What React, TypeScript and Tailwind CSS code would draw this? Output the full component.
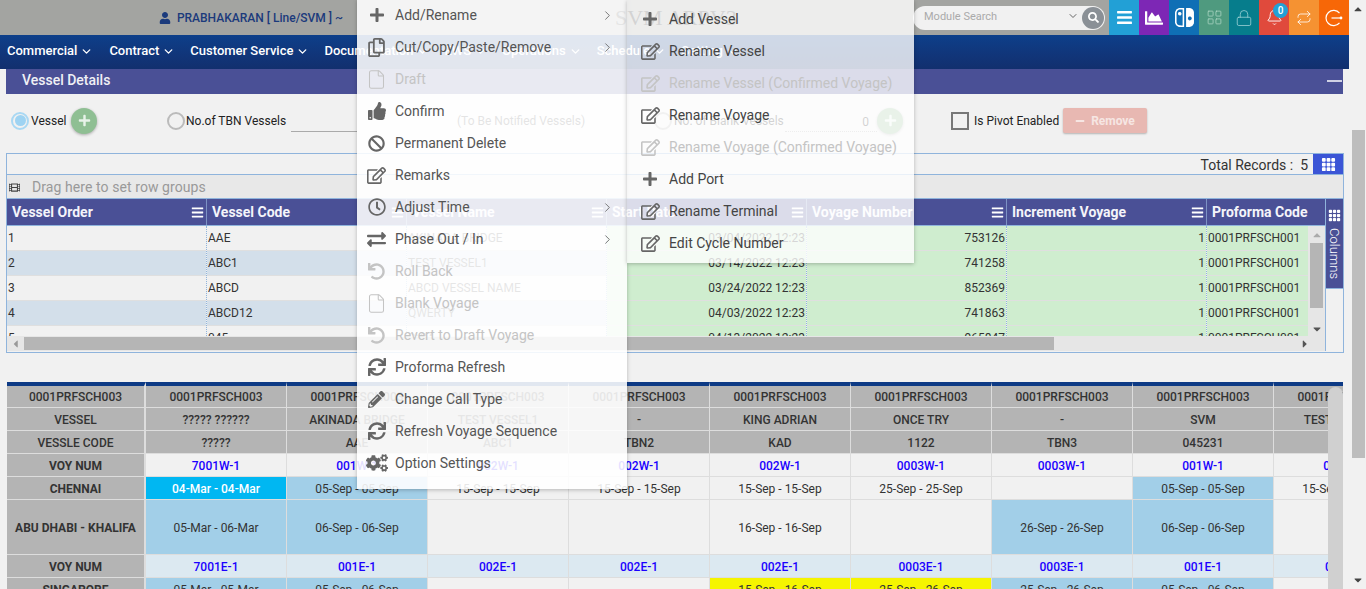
import { FaUser, FaBars, FaChartArea, FaPlus, FaMinus, FaRegCopy, FaThumbsUp, FaBan, FaRegEdit, FaRegClock, FaExchangeAlt, FaUndo, FaSync, FaPencilAlt, FaCogs, FaSearch, FaCaretUp, FaCaretDown, FaCaretLeft, FaCaretRight, FaFilm } from "react-icons/fa";
import { BsNintendoSwitch, BsGrid3X3GapFill } from "react-icons/bs";
import { ChevronDown, ChevronRight, File, LayoutGrid, Lock, Bell, Repeat } from "lucide-react";
import type { ReactNode } from "react";

const navItems = ["Commercial", "Contract", "Customer Service", "Documentation", "EWS", "Operations", "Schedule", "Setting"];

const gridCols = [
  { title: "Vessel Order", values: ["1", "2", "3", "4", "5"] },
  { title: "Vessel Code", values: ["AAE", "ABC1", "ABCD", "ABCD12", "045"] },
  { title: "Vessel Name", values: ["AKINADA BRIDGE", "TEST VESSEL1", "ABCD VESSEL NAME", "QWERTY", "SVM"] },
  { title: "Start Date", values: ["03/04/2022 12:23", "03/14/2022 12:23", "03/24/2022 12:23", "04/03/2022 12:23", "04/13/2022 12:23"], right: true, green: true },
  { title: "Voyage Number", values: ["753126", "741258", "852369", "741863", "965847"], right: true, green: true },
  { title: "Increment Voyage", values: ["1", "1", "1", "1", "1"], right: true, green: true },
  { title: "Proforma Code", values: ["0001PRFSCH001", "0001PRFSCH001", "0001PRFSCH001", "0001PRFSCH001", "0001PRFSCH001"], green: true },
];

type Tone = "" | "blue" | "cyan" | "yellow";
type Sched = { vessel: string; code: string; west: string; chennai: [string, Tone]; abu: [string, Tone]; east: string; sing: [string, Tone] };

const sched: Sched[] = [
  { vessel: "????? ??????", code: "?????", west: "7001W-1", chennai: ["04-Mar - 04-Mar", "cyan"], abu: ["05-Mar - 06-Mar", "blue"], east: "7001E-1", sing: ["05-Mar - 05-Mar", "blue"] },
  { vessel: "AKINADA BRIDGE", code: "AAE", west: "001W-1", chennai: ["05-Sep - 05-Sep", "blue"], abu: ["06-Sep - 06-Sep", "blue"], east: "001E-1", sing: ["05-Sep - 06-Sep", "blue"] },
  { vessel: "TEST VESSEL1", code: "ABC1", west: "002W-1", chennai: ["15-Sep - 15-Sep", ""], abu: ["", ""], east: "002E-1", sing: ["", ""] },
  { vessel: "-", code: "TBN2", west: "002W-1", chennai: ["15-Sep - 15-Sep", ""], abu: ["", ""], east: "002E-1", sing: ["", ""] },
  { vessel: "KING ADRIAN", code: "KAD", west: "002W-1", chennai: ["15-Sep - 15-Sep", ""], abu: ["16-Sep - 16-Sep", ""], east: "002E-1", sing: ["15-Sep - 16-Sep", "yellow"] },
  { vessel: "ONCE TRY", code: "1122", west: "0003W-1", chennai: ["25-Sep - 25-Sep", ""], abu: ["", ""], east: "0003E-1", sing: ["25-Sep - 26-Sep", "yellow"] },
  { vessel: "-", code: "TBN3", west: "0003W-1", chennai: ["", ""], abu: ["26-Sep - 26-Sep", "blue"], east: "0003E-1", sing: ["25-Sep - 26-Sep", "blue"] },
  { vessel: "SVM", code: "045231", west: "001W-1", chennai: ["05-Sep - 05-Sep", "blue"], abu: ["06-Sep - 06-Sep", "blue"], east: "001E-1", sing: ["05-Sep - 06-Sep", "blue"] },
  { vessel: "TEST VESSEL1", code: "ABC1", west: "002W-1", chennai: ["15-Sep - 15-Sep", ""], abu: ["", ""], east: "002E-1", sing: ["", ""] },
];

const toneClass = {
  "": "bg-[#f1f1f1] text-[#333]",
  blue: "bg-[#a2cfe8] text-[#333]",
  cyan: "bg-[#00b7f2] text-white font-medium",
  yellow: "bg-[#f5f500] text-[#333]",
};

const LogoutIcon = () => (
  <svg width="18" height="18" viewBox="0 0 18 18" fill="none" stroke="currentColor" strokeWidth="1.2">
    <path d="M14.5 4.2A7.6 7.6 0 1 0 14.5 13.8" />
    <path d="M6.5 9H17" />
    <circle cx="16" cy="9" r="0.8" fill="currentColor" />
  </svg>
);

const tiles: { bg: string; icon: ReactNode }[] = [
  { bg: "bg-[#22a0d6]", icon: <FaBars size={17} /> },
  { bg: "bg-[#7d27b5]", icon: <FaChartArea size={18} /> },
  { bg: "bg-[#0f6fb5]", icon: <BsNintendoSwitch size={19} /> },
  { bg: "bg-[#4f9a7f]", icon: <LayoutGrid size={17} strokeWidth={1} className="text-[#b6dccb]" /> },
  { bg: "bg-[#067d8c]", icon: <Lock size={18} strokeWidth={1} className="text-[#a5d5da]" /> },
  { bg: "bg-[#e04a3c]", icon: <Bell size={17} strokeWidth={1.3} /> },
  { bg: "bg-[#f59232]", icon: <Repeat size={16} strokeWidth={1.2} /> },
  { bg: "bg-[#f76707]", icon: <LogoutIcon /> },
];

type Item = { label: string; icon: ReactNode; off?: boolean; arrow?: boolean };

const mainMenu: Item[] = [
  { label: "Add/Rename", icon: <FaPlus size={16} />, arrow: true },
  { label: "Cut/Copy/Paste/Remove", icon: <FaRegCopy size={19} />, arrow: true },
  { label: "Draft", icon: <File size={21} strokeWidth={1.2} />, off: true },
  { label: "Confirm", icon: <FaThumbsUp size={18} /> },
  { label: "Permanent Delete", icon: <FaBan size={17} /> },
  { label: "Remarks", icon: <FaRegEdit size={19} /> },
  { label: "Adjust Time", icon: <FaRegClock size={18} />, arrow: true },
  { label: "Phase Out / In", icon: <FaExchangeAlt size={19} />, arrow: true },
  { label: "Roll Back", icon: <FaUndo size={17} />, off: true },
  { label: "Blank Voyage", icon: <File size={21} strokeWidth={1.2} />, off: true },
  { label: "Revert to Draft Voyage", icon: <FaUndo size={17} />, off: true },
  { label: "Proforma Refresh", icon: <FaSync size={18} /> },
  { label: "Change Call Type", icon: <FaPencilAlt size={17} /> },
  { label: "Refresh Voyage Sequence", icon: <FaSync size={18} /> },
  { label: "Option Settings", icon: <FaCogs size={22} /> },
];

const subMenu: Item[] = [
  { label: "Add Vessel", icon: <FaPlus size={16} /> },
  { label: "Rename Vessel", icon: <FaRegEdit size={19} /> },
  { label: "Rename Vessel (Confirmed Voyage)", icon: <FaRegEdit size={19} />, off: true },
  { label: "Rename Voyage", icon: <FaRegEdit size={19} /> },
  { label: "Rename Voyage (Confirmed Voyage)", icon: <FaRegEdit size={19} />, off: true },
  { label: "Add Port", icon: <FaPlus size={16} /> },
  { label: "Rename Terminal", icon: <FaRegEdit size={19} /> },
  { label: "Edit Cycle Number", icon: <FaRegEdit size={19} /> },
];

const MenuRow = ({ item, sub }: { item: Item; sub?: boolean }) => (
  <div className={`flex h-8 items-center ${item.off ? "text-[#c4c4c4]" : sub ? "text-[#444]" : "text-[#555]"}`}>
    <span className={`flex shrink-0 justify-center ${sub ? "w-[42px] pl-[4px]" : "w-[38px] pl-[1px]"} ${item.off ? "" : "text-[#666]"}`}>{item.icon}</span>
    <span>{item.label}</span>
    {item.arrow && <ChevronRight size={15} strokeWidth={1.4} className="ml-auto mr-[12px] text-[#666]" />}
  </div>
);

const Radio = ({ on }: { on?: boolean }) => (
  <span className={`flex h-[18px] w-[18px] shrink-0 items-center justify-center rounded-full border-2 ${on ? "border-[#a9d8f3]" : "border-[#bbb]"}`}>
    {on && <span className="h-[11px] w-[11px] rounded-full bg-[#9ed3f2]" />}
  </span>
);

const PlusBtn = () => (
  <span className="flex h-[26px] w-[26px] shrink-0 items-center justify-center rounded-full bg-[#8fbf93] text-[#e8f3e9] shadow-[0_1px_3px_rgba(0,0,0,0.3)]">
    <FaPlus size={13} />
  </span>
);

const MenuLines = () => <FaBars size={13} className="text-white" />;

export default function App() {
  return (
    <div className="relative flex h-[589px] w-[1366px] overflow-hidden bg-[#f1f1f1] font-['Roboto',sans-serif] text-[#333]">
      <div className="w-[1350px] shrink-0">
        {/* Top bar */}
        <div className="flex h-[35px] w-[1349px] items-center bg-[#a3a4a1]">
          <div className="flex w-[357px] items-center justify-end gap-[6px] pr-[14px] text-[12px] font-medium text-[#1b3a7c]">
            <FaUser size={12} />
            <span>PRABHAKARAN [ Line/SVM ] ~</span>
          </div>
          <div className="flex-1 pl-[258px] font-['Liberation_Serif',serif] text-[22px] leading-none text-[#222]">SVM ARPV3</div>
          <div className="relative mr-[4px] flex h-6 w-[192px] items-center rounded-full bg-[#f1f1f1] pl-[11px] text-[11px] text-[#aaa]">
            Module Search
            <ChevronDown size={12} className="absolute left-[154px] top-[4px] text-[#666]" />
            <span className="absolute right-[1px] top-[1px] flex h-[22px] w-[22px] items-center justify-center rounded-full bg-[#8a9096] text-white">
              <FaSearch size={11} />
            </span>
          </div>
          {tiles.map((t, i) => (
            <div key={i} className={`relative flex h-[35px] w-[30px] items-center justify-center text-white ${t.bg}`}>
              {t.icon}
              {i === 5 && (
                <span className="absolute right-[1px] top-[3px] flex h-[15px] w-[15px] items-center justify-center rounded-full bg-[#22a0d6] text-[10px] font-medium">0</span>
              )}
            </div>
          ))}
        </div>

        {/* Nav */}
        <div className="flex h-[34px] w-[1349px] items-center gap-[15px] bg-gradient-to-b from-[#0d3f8a] to-[#122f6e] pb-[2px] pl-[7px] text-[13px] font-medium text-white">
          {navItems.map((n) => (
            <span key={n} className="flex items-center gap-[3px] first:mr-[1px]">
              {n}
              <ChevronDown size={13} strokeWidth={2.5} />
            </span>
          ))}
        </div>

        {/* Panel */}
        <div className="ml-[6px] w-[1337px]">
          <div className="flex h-[25px] items-center justify-between bg-[#4a5096] pb-[2px] pl-4 pr-[1px] text-[14px] font-medium text-[#f0f0f5]">
            Vessel Details
            <span className="h-[2px] w-[15px] bg-[#cfd1e4]" />
          </div>

          <div className="flex h-[59px] items-center pb-[6px] text-[12px] text-[#222]">
            <span className="ml-[5px]"><Radio on /></span>
            <span className="ml-[2px] w-[40px]">Vessel</span>
            <PlusBtn />
            <span className="ml-[70px]"><Radio /></span>
            <span className="ml-[1px] w-[105px]">No.of TBN Vessels</span>
            <span className="h-[22px] w-[66px] border-b border-[#aaa]" />
            <span className="ml-[100px] w-[197px]">(To Be Notified Vessels)</span>
            <Radio />
            <span className="ml-[2px] w-[111px]">No. of Blank Vessels</span>
            <span className="flex h-[22px] w-[92px] items-end justify-end border-b border-dotted border-[#aaa] pr-[8px]">0</span>
            <PlusBtn />
            <span className="ml-[48px] h-[18px] w-[18px] shrink-0 border-2 border-[#777]" />
            <span className="ml-[5px] w-[85px] whitespace-nowrap">Is Pivot Enabled</span>
            <span className="ml-[4px] flex h-[25px] w-[84px] items-center justify-center gap-[6px] rounded-[2px] bg-[#e8b8b2] font-bold text-[#f6e6e3] shadow-[0_1px_2px_rgba(0,0,0,0.25)]">
              <FaMinus size={10} /> Remove
            </span>
          </div>

          {/* Vessel grid */}
          <div className="h-[200px] w-[1338px] border border-[#8fb4dc]">
            <div className="flex h-[20px] items-center justify-end text-[14px] text-[#333]">
              <span className="pt-[2px]">Total Records :&nbsp;&nbsp;5</span>
              <span className="ml-[5px] flex h-[20px] w-[30px] items-center justify-center bg-[#3b55d6] text-white">
                <BsGrid3X3GapFill size={15} />
              </span>
            </div>
            <div className="flex h-[25px] w-[1336px] items-center gap-[12px] border-y border-[#8fb4dc] bg-[#e8e8e8] pl-[2px] pt-[1px] text-[14px] text-[#999]">
              <FaFilm size={11} className="text-[#444]" />
              <span className="tracking-[0.08px]">Drag here to set row groups</span>
            </div>
            <div className="flex h-[152px]">
              <div className="w-[1318px] shrink-0">
                <div className="flex h-[27px] w-[1318px] overflow-hidden border-b border-[#8fb4dc] bg-[#4a5096] text-[14px] font-bold text-[#f4f4fa]">
                  {gridCols.map((c, i) => (
                    <div key={c.title} className={`flex h-full shrink-0 items-center justify-between border-r border-[#7d92c4] pl-[5px] pr-[2px] ${i === 6 ? "w-[118px] border-r-0" : "w-[200px]"}`}>
                      <span className="whitespace-nowrap">{c.title}</span>
                      {i < 6 && <MenuLines />}
                    </div>
                  ))}
                </div>
                <div className="flex h-[110px] w-[1318px]">
                  <div className="flex w-[1301px] overflow-hidden">
                    {gridCols.map((c, i) => (
                      <div key={c.title} className={`shrink-0 border-r border-dotted border-[#8fb4dc] ${i === 6 ? "w-[101px] border-r-0" : "w-[200px]"}`}>
                        {c.values.map((v, r) => (
                          <div
                            key={r}
                            className={`flex h-[25px] items-center whitespace-nowrap border-b border-[#dfdfdf] pl-[1px] pr-[1px] text-[12px] ${c.right ? "justify-end" : ""} ${c.green ? "bg-[#cfedcf]" : r % 2 ? "bg-[#d3dfea]" : "bg-[#f1f1f1]"}`}
                          >
                            {v}
                          </div>
                        ))}
                      </div>
                    ))}
                  </div>
                  <div className="flex h-[110px] w-[17px] shrink-0 flex-col items-center bg-[#e6e6e6] text-[#aaa]">
                    <FaCaretUp size={12} className="mt-[3px]" />
                    <span className="mt-[2px] h-[65px] w-[13px] bg-[#b5b5b5]" />
                    <FaCaretDown size={12} className="mt-auto mb-[1px] text-[#555]" />
                  </div>
                </div>
                <div className="flex h-[15px] w-[1318px] items-center bg-[#e6e6e6] text-[#999]">
                  <FaCaretLeft size={12} className="w-[17px] shrink-0" />
                  <span className="h-[13px] w-[1030px] bg-[#b5b5b5]" />
                  <FaCaretRight size={12} className="ml-[245px] text-[#555]" />
                </div>
              </div>
              <div className="w-[18px] shrink-0 border-l border-[#8fb4dc]">
                <div className="flex h-[90px] flex-col items-center gap-[6px] border-b border-[#8fb4dc] bg-[#4a5096] pt-[10px] text-white">
                  <BsGrid3X3GapFill size={13} />
                  <span className="text-[13px] font-light leading-none [writing-mode:vertical-rl]">Columns</span>
                </div>
              </div>
            </div>
          </div>
        </div>

        {/* Schedule table */}
        <div className="relative ml-[7px] mt-[29px] w-[1336px] overflow-hidden text-[12px]">
          <div className="grid w-[1408px] grid-cols-[139px_repeat(9,141px)] grid-rows-[26px_23px_23px_23px_23px_55px_23px_23px] text-center">
            {[
              { label: "0001PRFSCH003", get: () => "0001PRFSCH003" },
              { label: "VESSEL", get: (s: Sched) => s.vessel },
              { label: "VESSLE CODE", get: (s: Sched) => s.code },
            ].map((row, r) => (
              <div key={row.label} className="contents">
                <div className={`flex items-center justify-center border-r-2 border-b border-[#ddd] bg-[#b4b4b4] font-medium ${r === 0 ? "border-t-4 border-t-[#0d3a85]" : "pt-[1px]"}`}>{row.label}</div>
                {sched.map((s, i) => (
                  <div key={i} className={`flex items-center justify-center whitespace-nowrap border-r border-b border-[#ddd] bg-[#b4b4b4] font-medium ${r === 0 ? "border-t-4 border-t-[#0d3a85]" : "pt-[1px]"}`}>{row.get(s)}</div>
                ))}
              </div>
            ))}
            <Label>VOY NUM</Label>
            {sched.map((s, i) => (
              <div key={i} className="flex items-center justify-center border-r border-b border-[#ddd] bg-[#f1f1f1] pt-[1px] font-medium text-[#1a00ff]">{s.west}</div>
            ))}
            <Label>CHENNAI</Label>
            {sched.map((s, i) => (
              <DateCell key={i} cell={s.chennai} />
            ))}
            <Label>ABU DHABI - KHALIFA</Label>
            {sched.map((s, i) => (
              <DateCell key={i} cell={s.abu} />
            ))}
            <Label>VOY NUM</Label>
            {sched.map((s, i) => (
              <div key={i} className="flex items-center justify-center border-r border-b border-[#ddd] bg-[#dce9f1] pt-[1px] font-medium text-[#1a00ff]">{s.east}</div>
            ))}
            <Label>SINGAPORE</Label>
            {sched.map((s, i) => (
              <DateCell key={i} cell={s.sing} />
            ))}
          </div>
          {/* inner scrollbar laid over the table */}
          <div className="absolute right-0 top-[5px] h-[220px] w-[15px] rounded-t-full bg-[#d0d0d0]" />
        </div>
      </div>

      {/* Page scrollbar */}
      <div className="relative w-4 shrink-0 bg-[#f1f1f1] text-[#444]">
        <FaCaretUp size={12} className="mx-auto mt-[3px]" />
        <div className="mx-auto mt-[115px] h-[328px] w-[13px] bg-[#bdbdbd]" />
        <FaCaretDown size={12} className="mx-auto mt-[116px]" />
      </div>

      {/* Context menu */}
      <div className="absolute left-[357px] top-[-1px] h-[490px] w-[270px] bg-white/[0.88] text-[14px] shadow-[0_1px_4px_rgba(0,0,0,0.25)]">
        {mainMenu.map((m) => (
          <MenuRow key={m.label} item={m} />
        ))}
      </div>

      {/* Sub menu */}
      <div className="absolute left-[627px] top-0 h-[263px] w-[287px] bg-white/80 pt-[3px] text-[14px] shadow-[0_1px_4px_rgba(0,0,0,0.25)]">
        {subMenu.map((m) => (
          <MenuRow key={m.label} item={m} sub />
        ))}
      </div>
    </div>
  );
}

function Label({ children }: { children: ReactNode }) {
  return <div className="flex items-center justify-center whitespace-nowrap border-r-2 border-b border-[#ddd] bg-[#b4b4b4] pt-[1px] font-bold">{children}</div>;
}

function DateCell({ cell }: { cell: [string, Tone] }) {
  return <div className={`flex items-center justify-center whitespace-nowrap border-r border-b border-[#ddd] pt-[1px] ${toneClass[cell[1]]}`}>{cell[0]}</div>;
}
